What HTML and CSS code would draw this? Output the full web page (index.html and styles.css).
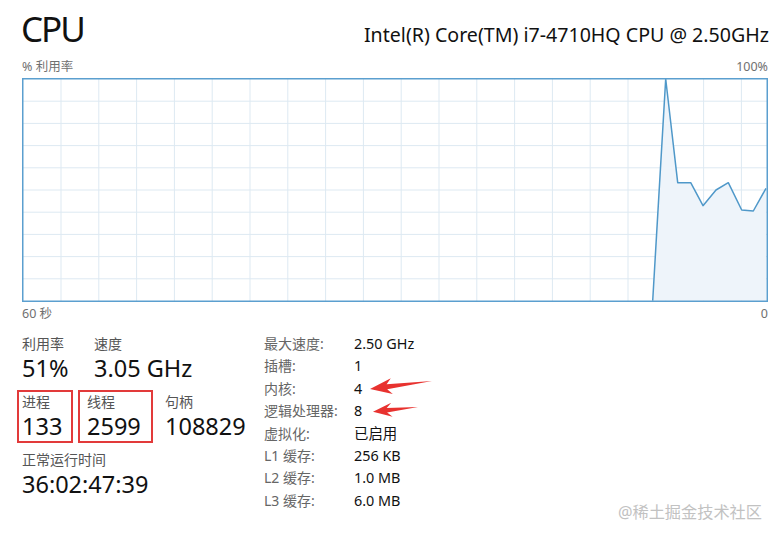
FILE: index.html
```html
<!DOCTYPE html>
<html lang="zh-CN">
<head>
  <meta charset="UTF-8">
  <meta name="viewport" content="width=device-width, initial-scale=1.0">
  <title>CPU</title>
  <link rel="stylesheet" href="styles.css">
</head>
<body>
  <div class="page">
    <div class="header">
      <h1 class="title">CPU</h1>
      <span class="model">Intel(R) Core(TM) i7-4710HQ CPU @ 2.50GHz</span>
    </div>

    <div class="chart-label">
      <span>% 利用率</span>
      <span>100%</span>
    </div>

    <svg class="chart" width="746" height="224" viewBox="0 0 746 224">
      <g class="grid">
        <line x1="39" y1="0" x2="39" y2="224"/>
        <line x1="76.8" y1="0" x2="76.8" y2="224"/>
        <line x1="114.6" y1="0" x2="114.6" y2="224"/>
        <line x1="152.4" y1="0" x2="152.4" y2="224"/>
        <line x1="190.2" y1="0" x2="190.2" y2="224"/>
        <line x1="228" y1="0" x2="228" y2="224"/>
        <line x1="265.8" y1="0" x2="265.8" y2="224"/>
        <line x1="303.6" y1="0" x2="303.6" y2="224"/>
        <line x1="341.4" y1="0" x2="341.4" y2="224"/>
        <line x1="379.2" y1="0" x2="379.2" y2="224"/>
        <line x1="417" y1="0" x2="417" y2="224"/>
        <line x1="454.8" y1="0" x2="454.8" y2="224"/>
        <line x1="492.6" y1="0" x2="492.6" y2="224"/>
        <line x1="530.4" y1="0" x2="530.4" y2="224"/>
        <line x1="568.2" y1="0" x2="568.2" y2="224"/>
        <line x1="606" y1="0" x2="606" y2="224"/>
        <line x1="643.8" y1="0" x2="643.8" y2="224"/>
        <line x1="681.6" y1="0" x2="681.6" y2="224"/>
        <line x1="719.4" y1="0" x2="719.4" y2="224"/>
        <line x1="0" y1="23.2" x2="746" y2="23.2"/>
        <line x1="0" y1="45.4" x2="746" y2="45.4"/>
        <line x1="0" y1="67.6" x2="746" y2="67.6"/>
        <line x1="0" y1="89.8" x2="746" y2="89.8"/>
        <line x1="0" y1="112" x2="746" y2="112"/>
        <line x1="0" y1="134.2" x2="746" y2="134.2"/>
        <line x1="0" y1="156.4" x2="746" y2="156.4"/>
        <line x1="0" y1="178.6" x2="746" y2="178.6"/>
        <line x1="0" y1="200.8" x2="746" y2="200.8"/>
      </g>
      <polygon class="area" points="630.7,222.7 643.7,1 655.7,104.7 668.7,104.7 681,127.7 694,112 706.3,104.7 719.7,132 731.3,133 744,110.3 744,222.7"/>
      <polyline class="usage" points="630.7,222.7 643.7,1 655.7,104.7 668.7,104.7 681,127.7 694,112 706.3,104.7 719.7,132 731.3,133 744,110.3"/>
      <rect class="frame" x="0.75" y="0.75" width="744.5" height="222.5"/>
    </svg>

    <div class="chart-label chart-label-bottom">
      <span>60 秒</span>
      <span>0</span>
    </div>

    <div class="stats">
      <div class="stats-main">
        <div class="stat-row">
          <div class="stat stat-usage">
            <div class="stat-name">利用率</div>
            <div class="stat-value">51%</div>
          </div>
          <div class="stat">
            <div class="stat-name">速度</div>
            <div class="stat-value">3.05 GHz</div>
          </div>
        </div>
        <div class="stat-row stat-row-marked">
          <div class="stat marked marked-first">
            <div class="stat-name">进程</div>
            <div class="stat-value">133</div>
          </div>
          <div class="stat marked marked-second">
            <div class="stat-name">线程</div>
            <div class="stat-value">2599</div>
          </div>
          <div class="stat stat-handles">
            <div class="stat-name">句柄</div>
            <div class="stat-value">108829</div>
          </div>
        </div>
        <div class="stat-row stat-row-uptime">
          <div class="stat">
            <div class="stat-name">正常运行时间</div>
            <div class="stat-value">36:02:47:39</div>
          </div>
        </div>
      </div>

      <dl class="specs">
        <dt>最大速度:</dt><dd>2.50 GHz</dd>
        <dt>插槽:</dt><dd>1</dd>
        <dt>内核:</dt><dd>4</dd>
        <dt>逻辑处理器:</dt><dd>8</dd>
        <dt>虚拟化:</dt><dd>已启用</dd>
        <dt>L1 缓存:</dt><dd>256 KB</dd>
        <dt>L2 缓存:</dt><dd>1.0 MB</dd>
        <dt>L3 缓存:</dt><dd>6.0 MB</dd>
      </dl>
    </div>
  </div>

  <!-- annotation arrows drawn over the specs -->
  <svg class="arrows" width="72" height="48" viewBox="0 0 72 48">
    <polygon points="5,17 27.8,22.1 22.2,17.3 67,9 21.6,12.3 25.8,6.3"/>
    <polygon points="8,39.7 27.6,44.7 22.1,40.4 53,35 21.7,36 26.2,30.7"/>
  </svg>

  <div class="watermark">@稀土掘金技术社区</div>
</body>
</html>
```

FILE: styles.css
```css
body {
  margin: 0;
  background-color: white;
  font-family: "Noto Sans", "Noto Sans CJK SC", sans-serif;
  color: #111;
}
.page {
  width: 746px;
  padding: 0 12px 0 22px;
}
.header {
  display: flex;
  justify-content: space-between;
  align-items: baseline;
  height: 56px;
  padding-top: 7px;
  box-sizing: border-box;
}
.title {
  margin: 0 0 0 -1px;
  font-size: 35px;
  font-weight: normal;
  line-height: 44px;
  letter-spacing: -2px;
}
.model {
  font-size: 19.6px;
  margin-right: -1px;
}
.chart-label {
  display: flex;
  justify-content: space-between;
  height: 22px;
  padding-top: 3px;
  box-sizing: border-box;
  font-size: 12.5px;
  line-height: 16px;
  color: #707070;
}
.chart-label-bottom {
  height: 31px;
  padding-top: 4px;
}
.chart {
  display: block;
}
.grid line {
  stroke: #dde9f2;
  stroke-width: 1;
}
.area {
  fill: #eef4fa;
}
.usage {
  fill: none;
  stroke: #4f98c9;
  stroke-width: 1.5;
  stroke-linejoin: round;
}
.frame {
  fill: none;
  stroke: #5b9fcf;
  stroke-width: 1.5;
}
.stats {
  display: flex;
}
.stats-main {
  width: 242px;
  padding-top: 1px;
}
.stat-row {
  display: flex;
}
.stat-usage {
  width: 72px;
}
.stat-name {
  font-size: 14px;
  line-height: 20px;
  color: #555;
}
.stat-value {
  font-size: 23.5px;
  line-height: 28px;
}
.stat-row-marked {
  margin-top: 8px;
}
.marked {
  border: 2px solid #e23a3a;
  padding-bottom: 1px;
}
.marked-first {
  width: 49px;
  margin-left: -5px;
  padding-left: 3px;
}
.marked-second {
  width: 64px;
  margin-left: 5px;
  padding-left: 7px;
}
.stat-handles {
  margin-left: 12px;
  padding-top: 2px;
}
.stat-row-uptime {
  margin-top: 7px;
}
.specs {
  display: grid;
  grid-template-columns: 90px auto;
  margin: 0;
  font-size: 14px;
  line-height: 22.4px;
}
.specs dt {
  color: #666;
}
.specs dd {
  margin: 0;
  font-size: 14.4px;
}
.arrows {
  position: absolute;
  left: 365px;
  top: 372px;
}
.arrows polygon {
  fill: #e8322f;
}
.watermark {
  position: absolute;
  right: 18px;
  top: 501px;
  font-size: 16.2px;
  line-height: 22px;
  color: #c2c2c2;
}
```
